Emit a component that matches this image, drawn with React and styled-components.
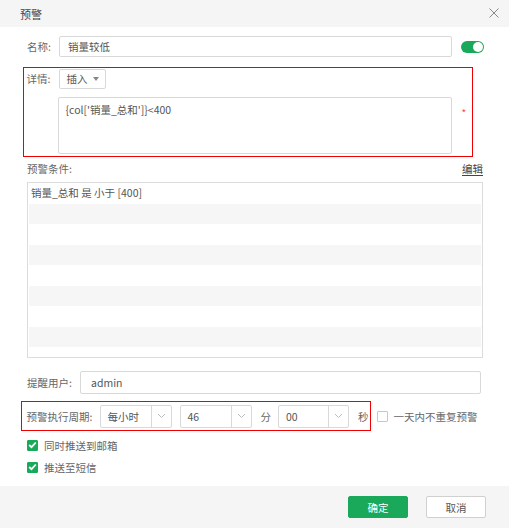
import React from "react";
import styled, { createGlobalStyle, css } from "styled-components";

const GlobalStyle = createGlobalStyle`
  html, body {
    margin: 0;
    padding: 0;
    background: #fff;
  }
  body {
    font-family: "Noto Sans CJK SC", "Liberation Sans", sans-serif;
    font-size: 10.5px;
    color: #555;
  }
`;

const GREEN = "#1aa95a";

function Chevron() {
  return (
    <svg width="9" height="6" viewBox="0 0 9 6">
      <path d="M1 1 L4.5 4.5 L8 1" fill="none" stroke="#bbb" strokeWidth="1" />
    </svg>
  );
}

function Check() {
  return (
    <svg width="9" height="8" viewBox="0 0 9 8">
      <path d="M1.2 4 L3.5 6.2 L7.8 1.5" fill="none" stroke="#fff" strokeWidth="1.8" />
    </svg>
  );
}

function App() {
  const stripes = [0, 1, 2, 3, 4, 5, 6, 7, 8];

  return (
    <>
      <GlobalStyle />
      <Dialog>
        <Header>
          <Title>预警</Title>
          <Close>
            <svg width="10" height="10" viewBox="0 0 10 10">
              <path d="M0.5 0.5 L9.5 9.5 M9.5 0.5 L0.5 9.5" stroke="#888" strokeWidth="1" />
            </svg>
          </Close>
        </Header>

        <Body>
          <NameRow>
            <Label>名称:</Label>
            <TextInput $width={393}>销量较低</TextInput>
            <Toggle />
          </NameRow>

          <Outlined $mt={10} $h={90}>
            <DetailRow>
              <Label>详情:</Label>
              <InsertSelect>
                插入
                <Caret />
              </InsertSelect>
            </DetailRow>
            <AreaRow>
              <TextArea>{"{col['销量_总和']}<400"}</TextArea>
              <Required>*</Required>
            </AreaRow>
          </Outlined>

          <CondHead>
            <span>预警条件:</span>
            <EditLink>编辑</EditLink>
          </CondHead>
          <CondBox>
            {stripes.map((i) => (
              <Stripe key={i} $odd={i % 2 === 1}>
                {i === 0 && "销量_总和 是 小于 [400]"}
              </Stripe>
            ))}
          </CondBox>

          <UserRow>
            <Label $w={53}>提醒用户:</Label>
            <TextInput $width={401} $h={23} $pl={10}>admin</TextInput>
          </UserRow>

          <ScheduleRow>
            <ScheduleBox>
              <Label $w={73}>预警执行周期:</Label>
              <Select $w={72}>
                <SelectValue>每小时</SelectValue>
                <SelectArrow>
                  <Chevron />
                </SelectArrow>
              </Select>
              <Select $w={72} $ml={8}>
                <SelectValue>46</SelectValue>
                <SelectArrow>
                  <Chevron />
                </SelectArrow>
              </Select>
              <Unit $ml={9}>分</Unit>
              <Select $w={71}>
                <SelectValue>00</SelectValue>
                <SelectArrow>
                  <Chevron />
                </SelectArrow>
              </Select>
              <Unit $ml={9} $mr={1}>秒</Unit>
            </ScheduleBox>
            <CheckItem $ml={6}>
              <Box />
              一天内不重复预警
            </CheckItem>
          </ScheduleRow>

          <CheckItem $mt={8} $pl={27}>
            <Box $checked>
              <Check />
            </Box>
            同时推送到邮箱
          </CheckItem>
          <CheckItem $mt={10} $pl={27}>
            <Box $checked>
              <Check />
            </Box>
            推送至短信
          </CheckItem>
        </Body>

        <Footer>
          <Button $primary>确定</Button>
          <Button>取消</Button>
        </Footer>
      </Dialog>
    </>
  );
}

export default App;

const Dialog = styled.div`
  width: 509px;
  height: 528px;
  display: flex;
  flex-direction: column;
  background: #fff;
  overflow: hidden;
`;

const Header = styled.div`
  height: 27px;
  flex: none;
  display: flex;
  align-items: center;
  justify-content: space-between;
  padding: 0 10px 0 20px;
  background: #f5f5f5;
`;

const Title = styled.div`
  font-size: 11px;
  color: #444;
`;

const Close = styled.div`
  display: flex;
  margin-top: -2px;
`;

const Body = styled.div`
  flex: 1;
  padding: 9px 0 0 0;
  display: flex;
  flex-direction: column;
`;

const Label = styled.div`
  width: ${(p) => p.$w || 32}px;
  flex: none;
  color: #666;
  white-space: nowrap;
`;

const NameRow = styled.div`
  display: flex;
  align-items: center;
  padding-left: 27px;
  height: 21px;
`;

const TextInput = styled.div`
  box-sizing: border-box;
  width: ${(p) => p.$width}px;
  height: ${(p) => p.$h || 21}px;
  border: 1px solid #d9d9d9;
  border-radius: 2px;
  padding-left: ${(p) => p.$pl || 8}px;
  display: flex;
  align-items: center;
  color: #555;
`;

const Toggle = styled.div`
  position: relative;
  width: 23px;
  height: 12px;
  border-radius: 6px;
  background: ${GREEN};
  margin-left: 9px;

  &::after {
    content: "";
    position: absolute;
    right: 1px;
    top: 1px;
    width: 10px;
    height: 10px;
    border-radius: 50%;
    background: #fff;
  }
`;

const Outlined = styled.div`
  box-sizing: border-box;
  margin-left: 23px;
  width: 450px;
  height: ${(p) => p.$h}px;
  margin-top: ${(p) => p.$mt || 0}px;
  border: 1.5px solid #f00000;
  padding-left: 2.5px;
`;

const DetailRow = styled.div`
  display: flex;
  align-items: center;
  height: 20px;
  margin-top: 0.5px;
`;

const InsertSelect = styled.div`
  box-sizing: border-box;
  width: 47px;
  height: 20px;
  border: 1px solid #d9d9d9;
  border-radius: 2px;
  padding: 0 6px 0 7px;
  display: flex;
  align-items: center;
  justify-content: space-between;
  color: #555;
`;

const Caret = styled.span`
  width: 0;
  height: 0;
  border-left: 3.5px solid transparent;
  border-right: 3.5px solid transparent;
  border-top: 4px solid #888;
`;

const AreaRow = styled.div`
  display: flex;
  align-items: flex-start;
  margin-top: 8px;
  padding-left: 31px;
`;

const TextArea = styled.div`
  box-sizing: border-box;
  width: 394px;
  height: 57px;
  border: 1px solid #d9d9d9;
  border-radius: 2px;
  padding: 5px 7px;
  color: #555;
  line-height: 14px;
`;

const Required = styled.span`
  color: #f44;
  font-size: 10px;
  margin: 8px 0 0 10px;
`;

const CondHead = styled.div`
  display: flex;
  justify-content: space-between;
  align-items: center;
  margin: 3px 26px 0 27px;
  height: 16px;
  color: #666;
`;

const EditLink = styled.span`
  color: #444;
  text-decoration: underline;
  text-underline-offset: 2px;
`;

const CondBox = styled.div`
  box-sizing: border-box;
  margin: 6px 26px 0 27px;
  height: 176px;
  border: 1px solid #dcdcdc;
  padding: 0 1px;
  overflow: hidden;
`;

const Stripe = styled.div`
  height: 20.5px;
  line-height: 20px;
  padding-left: 2px;
  color: #555;
  background: ${(p) => (p.$odd ? "#f6f6f6" : "#fff")};
`;

const UserRow = styled.div`
  display: flex;
  align-items: center;
  padding-left: 27px;
  margin-top: 13px;
`;

const ScheduleRow = styled.div`
  display: flex;
  align-items: center;
  margin-top: 7px;
  padding-left: 21px;
`;

const ScheduleBox = styled.div`
  box-sizing: border-box;
  height: 30px;
  display: flex;
  align-items: center;
  border: 1.5px solid #f00000;
  padding-left: 4.5px;
`;

const Select = styled.div`
  box-sizing: border-box;
  width: ${(p) => p.$w}px;
  height: 23px;
  margin-left: ${(p) => p.$ml || 0}px;
  border: 1px solid #d9d9d9;
  border-radius: 2px;
  display: flex;
  align-items: stretch;
`;

const SelectValue = styled.div`
  flex: 1;
  display: flex;
  align-items: center;
  padding-left: 7px;
  color: #555;
`;

const SelectArrow = styled.div`
  width: 19px;
  border-left: 1px solid #d9d9d9;
  display: flex;
  align-items: center;
  justify-content: center;
`;

const Unit = styled.span`
  margin: 0 ${(p) => (p.$mr != null ? p.$mr : 7)}px 0 ${(p) => p.$ml || 12}px;
  color: #666;
`;

const CheckItem = styled.div`
  display: flex;
  align-items: center;
  gap: 6px;
  height: 12px;
  margin-left: ${(p) => p.$ml || 0}px;
  margin-top: ${(p) => p.$mt || 0}px;
  padding-left: ${(p) => p.$pl || 0}px;
  color: #666;
  white-space: nowrap;
`;

const Box = styled.span`
  box-sizing: border-box;
  width: 11px;
  height: 11px;
  border: 1px solid #c8c8c8;
  border-radius: 1px;
  display: inline-flex;
  align-items: center;
  justify-content: center;

  ${(p) =>
    p.$checked &&
    css`
      background: ${GREEN};
      border-color: ${GREEN};
    `}
`;

const Footer = styled.div`
  height: 42px;
  flex: none;
  background: #f5f5f5;
  display: flex;
  align-items: center;
  justify-content: flex-end;
  gap: 18px;
  padding-right: 23px;
`;

const Button = styled.div`
  box-sizing: border-box;
  width: 60px;
  height: 22px;
  display: flex;
  align-items: center;
  justify-content: center;
  border-radius: 2px;
  border: 1px solid #d0d0d0;
  background: #fff;
  color: #555;

  ${(p) =>
    p.$primary &&
    css`
      background: ${GREEN};
      border-color: ${GREEN};
      color: #fff;
    `}
`;
